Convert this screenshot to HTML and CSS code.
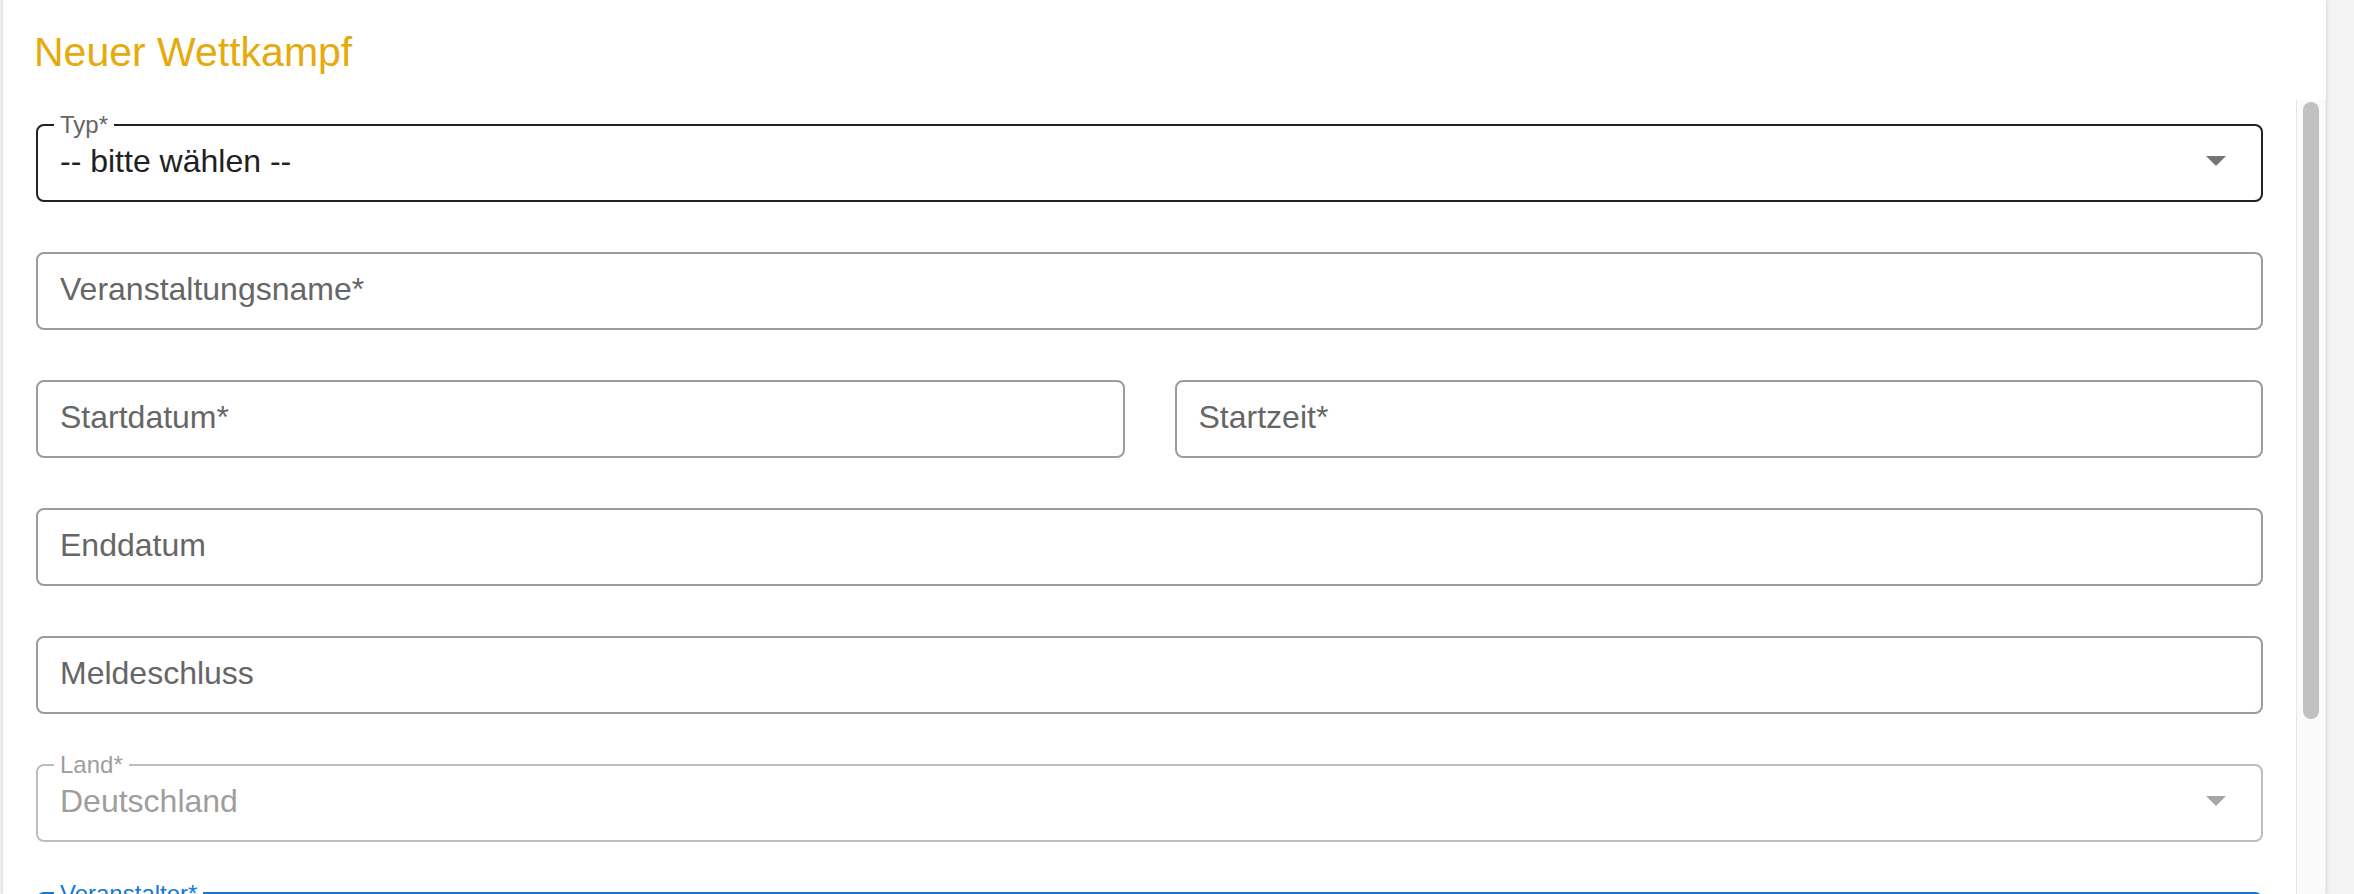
FILE: index.html
```html
<!DOCTYPE html>
<html lang="de">
<head>
  <meta charset="UTF-8">
  <meta name="viewport" content="width=device-width, initial-scale=1.0">
  <title>Neuer Wettkampf</title>
  <link rel="stylesheet" href="styles.css">
</head>
<body>

<div class="dialog">
  <h2 class="dialog-title">Neuer Wettkampf</h2>

  <div class="dialog-body">
    <div class="dialog-content">
      <!-- Typ -->
      <div class="field field-active">
        <span class="field-label">Typ*</span>
        <span class="field-value">-- bitte wählen --</span>
        <svg class="arrow" width="20" height="10" viewBox="0 0 20 10"><path d="M0 0l10 10 10-10z"/></svg>
      </div>

      <div class="field">
        <span class="placeholder">Veranstaltungsname*</span>
      </div>

      <div class="field-row">
        <div class="field">
          <span class="placeholder">Startdatum*</span>
        </div>
        <div class="field">
          <span class="placeholder">Startzeit*</span>
        </div>
      </div>

      <div class="field">
        <span class="placeholder">Enddatum</span>
      </div>

      <div class="field">
        <span class="placeholder">Meldeschluss</span>
      </div>

      <!-- Land ist gesperrt -->
      <div class="field field-disabled">
        <span class="field-label">Land*</span>
        <span class="field-value">Deutschland</span>
        <svg class="arrow" width="20" height="10" viewBox="0 0 20 10"><path d="M0 0l10 10 10-10z"/></svg>
      </div>

      <div class="field field-focused">
        <span class="field-label">Veranstalter*</span>
        <span class="field-value"></span>
      </div>
    </div>

    <!-- Scrollleiste -->
    <div class="scrollbar">
      <div class="scrollbar-thumb"></div>
    </div>
  </div>
</div>

</body>
</html>
```

FILE: styles.css
```css
html, body {
  margin: 0;
  height: 100%;
}

body {
  font-family: "Liberation Sans", Arial, Helvetica, sans-serif;
  background-color: #f3f3f3;
  color: #212121;
  overflow: hidden;
}

.dialog {
  margin-left: 3px;
  width: 2323px;
  height: 100%;
  background-color: #fff;
  box-shadow: 0 0 4px rgba(0, 0, 0, 0.18);
  display: flex;
  flex-direction: column;
}

.dialog-title {
  margin: 0;
  height: 100px;
  box-sizing: border-box;
  padding: 28px 0 0 31px;
  font-size: 41px;
  font-weight: normal;
  line-height: 48px;
  color: #e6aa0c;
  flex-shrink: 0;
}

.dialog-body {
  flex: 1;
  min-height: 0;
  display: flex;
}

.dialog-content {
  flex: 1;
  overflow: hidden;
  padding: 24px 33px 0 33px;
  display: flex;
  flex-direction: column;
  gap: 50px;
}

.scrollbar {
  width: 28px;
  flex-shrink: 0;
  background-color: #fafafa;
  border-left: 1px solid #e6e6e6;
  border-right: 1px solid #ececec;
}

.scrollbar-thumb {
  height: 617px;
  margin: 2px 6px 0 6px;
  border-radius: 8px;
  background-color: #c1c1c1;
}

.field-row {
  display: grid;
  grid-template-columns: 1fr 1fr;
  gap: 50px;
}

.field {
  position: relative;
  flex-shrink: 0;
  height: 78px;
  box-sizing: border-box;
  border: 2px solid #9c9c9c;
  border-radius: 8px;
  padding: 0 35px 4px 22px;
  display: flex;
  align-items: center;
  font-size: 32px;
}

.placeholder {
  color: #666;
}

.field-value {
  flex: 1;
  color: #212121;
}

.field-label {
  position: absolute;
  top: -13px;
  left: 16px;
  padding: 0 6px;
  font-size: 24px;
  line-height: 24px;
  color: #666;
  background-color: #fff;
}

.arrow {
  fill: #757575;
  flex-shrink: 0;
}

.field-active {
  border-color: #212121;
}

.field-disabled {
  border-color: #bdbdbd;
}

.field-disabled .field-label,
.field-disabled .field-value {
  color: #9e9e9e;
}

.field-disabled .arrow {
  fill: #a6a6a6;
}

.field-focused {
  border: 4px solid #1976d2;
  padding-left: 20px;
}

.field-focused .field-label {
  top: -14px;
  left: 14px;
  color: #1976d2;
}
```
